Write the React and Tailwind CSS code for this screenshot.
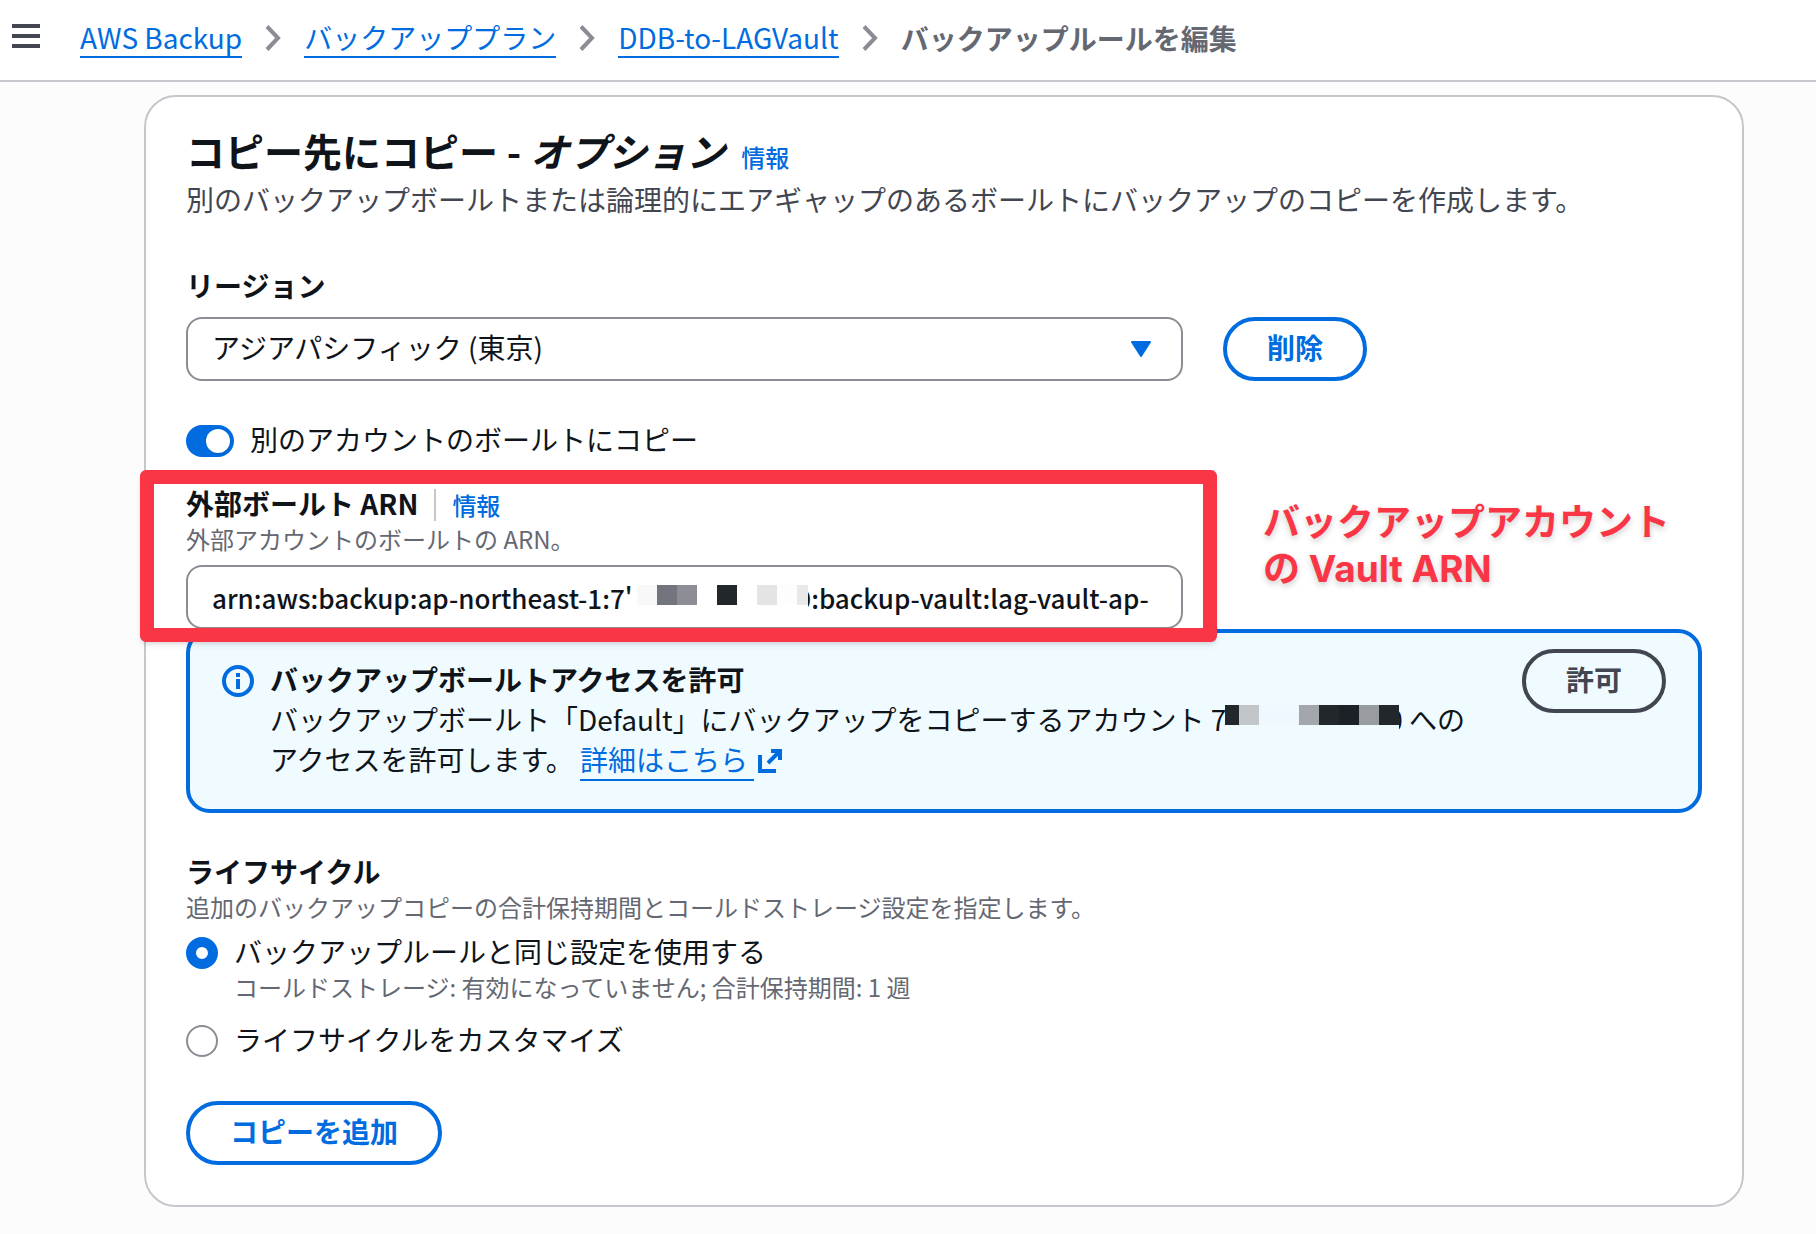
import React from "react";

const LINK = "text-[#006ce0]";
const LABEL = "pb-1 text-[28px] leading-8";

function Chevron() {
  return (
    <svg className="mx-[23px] h-[26px] w-4 shrink-0" viewBox="0 0 16 26" fill="none" stroke="#8c8c94" strokeWidth="4" aria-hidden="true">
      <path d="M2 1.5 13 13 2 24.5" />
    </svg>
  );
}

function Crumb({ children }) {
  return (
    <a href="#" className="border-b-2 border-[#006ce0] text-[28px] leading-[38px] text-[#006ce0]">
      {children}
    </a>
  );
}

function Button({ children, muted }) {
  return (
    <button
      type="button"
      className={
        "h-16 shrink-0 rounded-full border-4 px-10 pb-1 text-[28px] font-bold leading-9 " +
        (muted ? "border-[#424650] text-[#424650]" : "border-[#006ce0] text-[#006ce0]")
      }
    >
      {children}
    </button>
  );
}

function Mosaic({ cells, className }) {
  return (
    <span className={"absolute flex h-7 " + className} aria-hidden="true">
      {cells.map((c, i) => (
        <span key={i} className="h-5" style={{ width: c[0], backgroundColor: c[1] }} />
      ))}
    </span>
  );
}

const ARN_CELLS = [
  [6, "#ffffff"], [20, "#f8f8f8"], [20, "#72757e"], [20, "#8d8d95"], [20, "#ffffff"], [20, "#22272b"],
  [20, "#ffffff"], [20, "#e4e4e6"], [20, "#fdfdfd"], [11, "#e9e9ea"],
];
const ACCOUNT_CELLS = [
  [14, "#22272b"], [20, "#c3c6c8"], [40, "#f0f8ff"], [20, "#a3a6aa"], [20, "#22272b"], [20, "#1b2126"],
  [20, "#989ca0"], [20, "#22272b"],
];

function Radio({ id, label, note, defaultChecked }) {
  return (
    <div className="grid grid-cols-[32px_1fr] items-center gap-x-4">
      <input
        type="radio"
        name="lifecycle"
        id={id}
        defaultChecked={defaultChecked}
        className="size-8 appearance-none rounded-full border-2 border-[#8c8c94] bg-white checked:border-[10px] checked:border-[#006ce0]"
      />
      <label htmlFor={id} className={LABEL}>{label}</label>
      {note && <p className="col-start-2 pb-1 text-2xl leading-8 text-[#656871]">{note}</p>}
    </div>
  );
}

export default function App() {
  return (
    <div lang="ja" className="min-h-screen bg-[#fcfcfd] pb-7 font-['Noto_Sans_CJK_JP',sans-serif] text-[#0f141a]">
      <header className="flex h-[82px] items-center border-b-2 border-[#c6c6cd] bg-white pl-3">
        <button type="button" aria-label="メニュー" className="mr-10 flex h-6 w-7 -translate-y-1 flex-col justify-between">
          <span className="h-1 w-full bg-[#424650]" />
          <span className="h-1 w-full bg-[#424650]" />
          <span className="h-1 w-full bg-[#424650]" />
        </button>
        <nav aria-label="パンくず" className="flex items-center pb-1">
          <Crumb>AWS Backup</Crumb>
          <Chevron />
          <Crumb>バックアッププラン</Crumb>
          <Chevron />
          <Crumb>DDB-to-LAGVault</Crumb>
          <Chevron />
          <span className="text-[28px] font-bold leading-10 text-[#656871]">バックアップルールを編集</span>
        </nav>
      </header>

      <main className="mt-[13px] ml-36 mr-18 rounded-[32px] border-2 border-[#c6c6cd] bg-white px-10 pt-[29px] pb-10">
        <div className="flex items-baseline gap-4">
          <h2 className="text-[39px] font-bold leading-[48px]">
            コピー先にコピー - <i>オプション</i>
          </h2>
          <a href="#" className={"text-2xl font-medium leading-9 " + LINK}>情報</a>
        </div>
        <p className="mt-0.5 text-[28px] leading-[44px] text-[#424650]">
          別のバックアップボールトまたは論理的にエアギャップのあるボールトにバックアップのコピーを作成します。
        </p>

        <div className="mt-12 grid grid-cols-[997fr_479fr] gap-x-10">
          <label htmlFor="region" className={"col-span-2 mb-3 font-bold " + LABEL}>リージョン</label>
          <div className="relative">
            <select id="region" className="h-16 w-full appearance-none rounded-2xl border-2 border-[#8c8c94] bg-white px-6 pb-1 text-[28px]">
              <option>アジアパシフィック (東京)</option>
            </select>
            <svg className="pointer-events-none absolute top-6 right-8 h-4 w-5" viewBox="0 0 20 16" fill="#006ce0" stroke="#006ce0" strokeWidth="2" strokeLinejoin="round" aria-hidden="true">
              <path d="M1 1h18L10 15z" />
            </svg>
          </div>
          <div><Button>削除</Button></div>

          <div className="col-span-2 mt-10 flex h-10 items-center gap-4">
            <input
              id="cross-account"
              type="checkbox"
              role="switch"
              defaultChecked
              className="relative h-8 w-12 appearance-none rounded-full bg-[#006ce0] after:absolute after:top-1 after:right-1 after:size-6 after:rounded-full after:bg-white after:shadow"
            />
            <label htmlFor="cross-account" className={LABEL}>別のアカウントのボールトにコピー</label>
          </div>

          <div className="relative mt-[26px]">
            <div className="flex items-center">
              <label htmlFor="vault-arn" className={"font-bold " + LABEL}>外部ボールト ARN</label>
              <span className="mx-4 h-8 w-0.5 bg-[#c6c6cd]" />
              <a href="#" className={"text-2xl font-medium leading-9 " + LINK}>情報</a>
            </div>
            <p className="pb-1 text-2xl leading-8 text-[#656871]">外部アカウントのボールトの ARN。</p>
            <div className="relative mt-1.5">
              <input
                id="vault-arn"
                type="text"
                defaultValue={"arn:aws:backup:ap-northeast-1:7'" + "\u00a0".repeat(28) + "0:backup-vault:lag-vault-ap-"}
                className="h-16 w-full rounded-2xl border-2 border-[#8c8c94] bg-white pr-4 pl-6 text-[26px] font-medium"
              />
              <Mosaic cells={ARN_CELLS} className="top-5 left-[445px] bg-white" />
            </div>
            <div className="pointer-events-none absolute -top-[17px] -right-[34px] -bottom-[13px] -left-[46px] z-10 rounded-md border-[14px] border-[#fa3545] shadow-md" />
          </div>
          <p className="mt-[39px] pl-10 font-[Inter,'Noto_Sans_CJK_JP',sans-serif] text-[37px] font-bold leading-[46px] text-[#fa3545] [paint-order:stroke_fill] [-webkit-text-stroke:5px_#ffffff] [text-shadow:0_3px_6px_rgb(0_0_0/0.2)]">
            バックアップアカウント
            <br />の Vault ARN
          </p>
        </div>

        <section className="flex items-start rounded-3xl border-4 border-[#006ce0] bg-[#f0fbff] pt-4 pr-8 pb-[30px] pl-8">
          <svg className="mt-4 size-8 shrink-0" viewBox="0 0 32 32" fill="none" stroke="#006ce0" strokeWidth="4" aria-hidden="true">
            <circle cx="16" cy="16" r="14" />
            <path d="M16 14v10M16 8v4" />
          </svg>
          <div className="ml-4 grow pt-2.5 text-[28px] leading-10">
            <h3 className="font-bold">バックアップボールトアクセスを許可</h3>
            <p>
              バックアップボールト「Default」にバックアップをコピーするアカウント{" "}
              <span className="relative inline-block w-[192px]">
                7<span className="absolute right-0">0</span>
                <Mosaic cells={ACCOUNT_CELLS} className="top-1.5 right-1 bg-[#f0fbff]" />
              </span>{" "}
              への
              <br />
              アクセスを許可します。{" "}
              <a href="#" className={LINK}>
                <span className="border-b-2 border-[#006ce0]">詳細はこちら&nbsp;</span>
                <svg className="ml-1 inline size-6 -translate-y-0.5" viewBox="0 0 24 24" fill="none" stroke="#006ce0" strokeWidth="4" aria-hidden="true">
                  <path d="M13 2h9v9M22 2 10 14M2 6v16h16" />
                </svg>
              </a>
            </p>
          </div>
          <Button muted>許可</Button>
        </section>

        <fieldset className="mt-10">
          <legend className="text-[28px] font-bold leading-9">ライフサイクル</legend>
          <p className="mb-2.5 text-2xl leading-9 text-[#656871]">
            追加のバックアップコピーの合計保持期間とコールドストレージ設定を指定します。
          </p>
          <Radio id="same" label="バックアップルールと同じ設定を使用する" note="コールドストレージ: 有効になっていません; 合計保持期間: 1 週" defaultChecked />
          <div className="h-4" />
          <Radio id="custom" label="ライフサイクルをカスタマイズ" />
        </fieldset>

        <div className="mt-[42px]"><Button>コピーを追加</Button></div>
      </main>
    </div>
  );
}
